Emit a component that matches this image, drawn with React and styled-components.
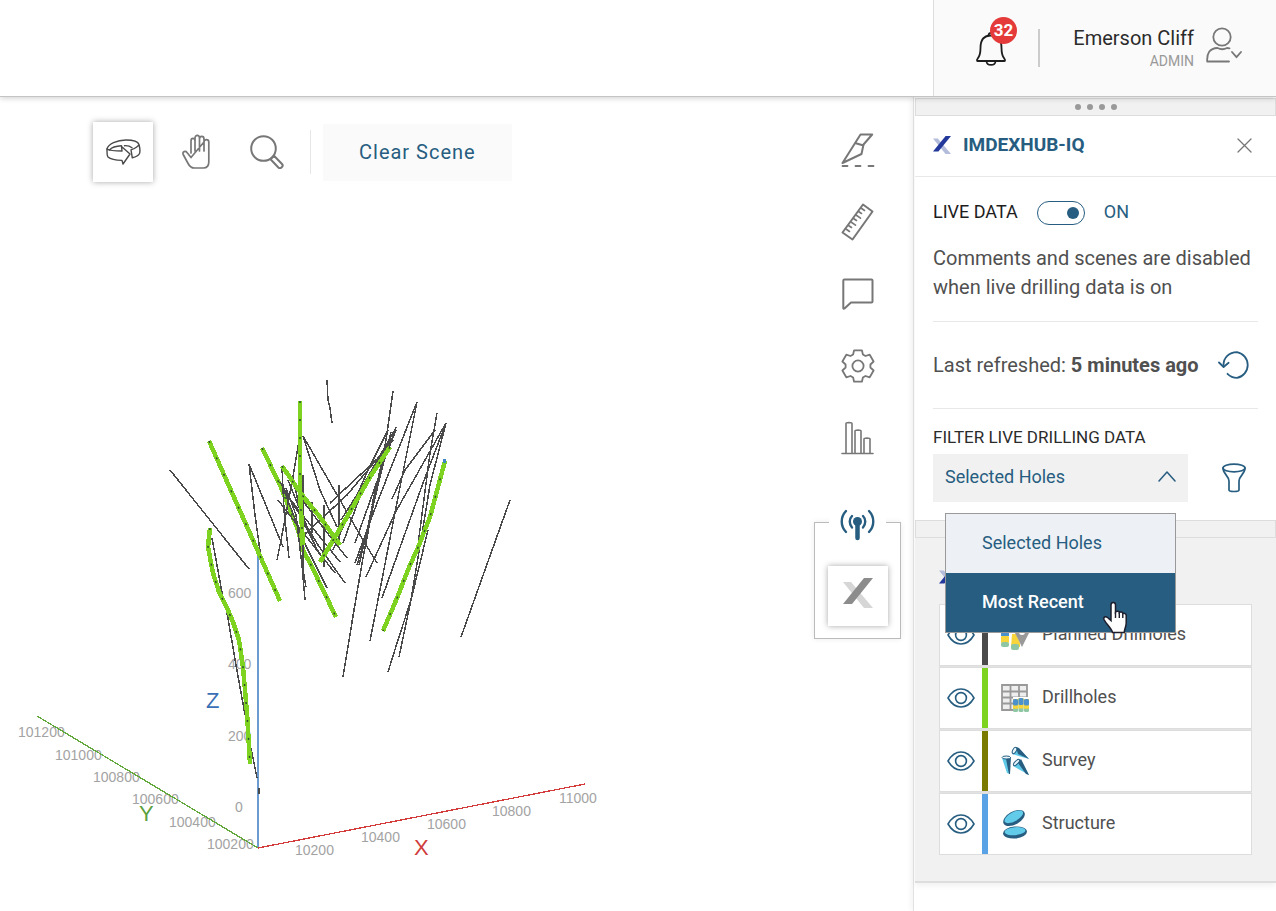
import React, { useState } from 'react'
import styled, { createGlobalStyle } from 'styled-components';

const GlobalStyle = createGlobalStyle`
  * {
    box-sizing: border-box;
  }
  body {
    margin: 0;
    background-color: #fff;
    font-family: Roboto, "Liberation Sans", sans-serif;
    color: #505050;
  }
  button, select {
    font-family: inherit;
    border: none;
    background: none;
    padding: 0;
    margin: 0;
    cursor: pointer;
  }
  ul {
    list-style: none;
    margin: 0;
    padding: 0;
  }
  svg {
    display: block;
  }
`
const Page = styled.div`
  min-height: 100vh;
  display: flex;
  flex-direction: column;
`
const Header = styled.header`
  position: relative;
  z-index: 2;
  display: flex;
  justify-content: flex-end;
  height: 97px;
  background-color: #fff;
  border-bottom: 1px solid #c4c4c4;
  box-shadow: 0 1px 6px rgba(0, 0, 0, .2);
`
const Profile = styled.div`
  display: flex;
  align-items: center;
  width: 343px;
  padding: 0 34px 0 42px;
  background-color: #fafafa;
  border-left: 1px solid #ddd;
`
const BellButton = styled.button`
  position: relative;
  width: 30px;
  height: 36px;
  margin-right: 32px;
`
const Badge = styled.span`
  position: absolute;
  top: -13px;
  left: 14px;
  width: 27px;
  height: 27px;
  border-radius: 50%;
  background-color: #e53a3a;
  color: #fff;
  font-size: 17px;
  font-weight: 700;
  line-height: 27px;
  text-align: center;
`
const Divider = styled.span`
  width: ${p => p.$thick ? 2 : 1}px;
  height: ${p => p.$thick ? 38 : 44}px;
  background-color: ${p => p.$thick ? '#ccc' : '#e6e6e6'};
`
const User = styled.button`
  flex: 1;
  display: flex;
  justify-content: flex-end;
  align-items: center;
  gap: 12px;
  > svg {
    margin-bottom: 6px;
  }
`
const UserText = styled.span`
  display: flex;
  flex-direction: column;
  align-items: flex-end;
  padding-top: 2px;
`
const UserName = styled.span`
  font-size: 20px;
  line-height: 24px;
  color: #2b2b2b;
`
const Role = styled.span`
  font-size: 14px;
  line-height: 22px;
  color: #999;
`
const Main = styled.main`
  flex: 1;
  display: flex;
  align-items: stretch;
`
const Stage = styled.section`
  flex: 1;
  min-width: 0;
`
const Toolbar = styled.div`
  display: flex;
  align-items: center;
  padding: 25px 0 0 93px;
`
const Tool = styled.button`
  display: grid;
  place-items: center;
  width: ${p => p.$active ? 60 : 71}px;
  height: 60px;
  background-color: #fff;
  box-shadow: ${p => p.$active ? '0 0 6px rgba(0, 0, 0, .35)' : 'none'};
`
const HubTool = styled(Tool)`
  padding-bottom: 6px;
`
const ToolPair = styled.div`
  display: flex;
  margin: 0 8px 0 7px;
`
const ClearButton = styled.button`
  height: 57px;
  margin-left: 12px;
  padding: 0 36px;
  background-color: #fafafa;
  color: #265d80;
  font-size: 20px;
  letter-spacing: 1px;
`
const Scene = styled.svg`
  margin-top: 188px;
  font-family: "Liberation Sans", Arial, sans-serif;
`
const Rail = styled.nav`
  display: flex;
  flex-direction: column;
  width: 87px;
  margin-right: 12px;
  padding-top: 17px;
`
const RailButton = styled.button`
  display: grid;
  place-items: center;
  height: 72px;
`
const RailGroup = styled.div`
  display: flex;
  flex-direction: column;
  align-items: center;
  gap: 15px;
  margin-top: 48px;
  padding-bottom: 12px;
  border: 1px solid #bbb;
  box-shadow: 0 0 6px rgba(0, 0, 0, .08);
`
const LiveButton = styled.button`
  display: grid;
  place-items: center;
  width: 57px;
  height: 52px;
  margin-top: -24px;
  background-color: #fff;
`
const Panel = styled.aside`
  width: 363px;
  border-left: 1px solid #e2e2e2;
  padding-left: 1px;
  box-shadow: -2px 0 6px rgba(0, 0, 0, .05);
`
const PanelInner = styled.div`
  padding-top: 1px;
  border-bottom: 2px solid #ddd;
  box-shadow: 0 3px 6px rgba(0, 0, 0, .06);
`
const Grip = styled.div`
  display: flex;
  justify-content: center;
  align-items: center;
  gap: 6px;
  height: 18px;
  background-color: #f1f1f1;
  border: 1px solid #ddd;
`
const Dot = styled.span`
  width: 6px;
  height: 6px;
  border-radius: 50%;
  background-color: #999;
`
const PanelHead = styled.div`
  display: flex;
  align-items: center;
  gap: 12px;
  height: 61px;
  padding: 0 24px 2px 18px;
  border-bottom: 1px solid #e8e8e8;
`
const PanelTitle = styled.h2`
  flex: 1;
  margin: 0;
  padding-bottom: 1px;
  font-size: 19px;
  font-weight: 700;
  color: #265d80;
`
const Section = styled.section`
  margin: 0 18px;
  padding: ${p => p.$pad};
  border-bottom: ${p => p.$last ? 'none' : '1px solid #e8e8e8'};
`
const LiveRow = styled.label`
  display: flex;
  align-items: flex-start;
  gap: 19px;
  height: 24px;
  font-size: 18px;
  line-height: 22px;
  color: #1d1d1d;
`
const Switch = styled.input`
  appearance: none;
  position: relative;
  width: 48px;
  height: 24px;
  margin: 0;
  border: 1px solid #265d80;
  border-radius: 12px;
  background-color: #fff;
  &::after {
    content: '';
    position: absolute;
    top: 5px;
    left: 5px;
    width: 12px;
    height: 12px;
    border-radius: 50%;
    background-color: #265d80;
  }
  &:checked::after {
    left: 29px;
  }
`
const SwitchState = styled.span`
  color: #265d80;
`
const Note = styled.p`
  margin: 19px 0 0;
  font-size: 20px;
  line-height: 29px;
`
const Refresh = styled.div`
  display: flex;
  justify-content: space-between;
  align-items: center;
  height: 86px;
  padding-right: 6px;
  font-size: 20px;
`
const FilterLabel = styled.label`
  display: block;
  font-size: 17px;
  line-height: 20px;
  color: #2b2b2b;
`
const FilterRow = styled.div`
  display: flex;
  justify-content: space-between;
  align-items: center;
  margin-top: 7px;
  padding-right: 12px;
`
const SelectBox = styled.div`
  position: relative;
  width: 255px;
  > svg {
    position: absolute;
    top: 16px;
    right: 12px;
    pointer-events: none;
  }
`
const Select = styled.select`
  appearance: none;
  display: block;
  width: 100%;
  height: 48px;
  padding: 0 12px 4px;
  background-color: #f1f1f1;
  color: #265d80;
  font-size: 18px;
`
const Menu = styled.ul`
  position: absolute;
  z-index: 3;
  top: 59px;
  left: 12px;
  width: 231px;
  border: 1px solid #999;
  background-color: #edf1f5;
`
const Option = styled.button`
  display: block;
  width: 100%;
  height: 59px;
  padding: 0 0 2px 36px;
  text-align: left;
  font-size: 18px;
  font-weight: ${p => p.$hover ? 500 : 400};
  color: ${p => p.$hover ? '#fff' : '#265d80'};
  background-color: ${p => p.$hover ? '#265d80' : '#edf1f5'};
`
const Pointer = styled.span`
  position: absolute;
  z-index: 4;
  top: 147px;
  left: 169px;
  pointer-events: none;
`
const Layers = styled.section`
  padding: 0 24px 26px;
  background-color: #f1f1f1;
`
const LayersHead = styled.div`
  display: flex;
  align-items: center;
  height: 66px;
  padding-top: 11px;
`
const LayerList = styled.ul`
  display: flex;
  flex-direction: column;
  gap: 1px;
  background-color: #e2e2e2;
`
const Layer = styled.li`
  display: flex;
  align-items: center;
  height: 62px;
  border: 1px solid #ddd;
  background-color: #fff;
  font-size: 18px;
`
const EyeButton = styled.button`
  display: grid;
  place-items: center;
  width: 42px;
  height: 60px;
`
const Strip = styled.span`
  width: 6px;
  height: 60px;
  margin-right: 13px;
  background-color: ${p => p.$color};
`
const LayerName = styled.span`
  margin-left: 13px;
  padding-bottom: 4px;
`

const Line = ({ children, w, h, color = '#777', width = 2 }) => (
  <svg width={w} height={h} viewBox={`0 0 ${w} ${h}`} fill="none" stroke={color}
    strokeWidth={width} strokeLinejoin="round" strokeLinecap="round" aria-hidden="true">
    {children}
  </svg>
)

const BrandX = ({ size, back = '#b3bcdb', front = '#22399b' }) => (
  <svg width={size} height={size} viewBox="0 0 30 30" aria-hidden="true">
    <path d="M0 4h8l22 26h-9z" fill={back} />
    <path d="M21 0h9L9 26H0z" fill={front} />
  </svg>
)

const Bell = () => (
  <Line w={30} h={36} color="#1d1d1d" width={1.8}>
    <path d="M1.500 31c-.7 0-.7-1.500 0-2.200C4 26 4.500 23 4.500 18 4.500 10 8 5.500 15 5.500S25.500 10 25.500 18c0 5 .5 8 3 10.800.7.700.7 2.200 0 2.200z" />
    <path d="M12.500 5.500c0-3.500 5-3.500 5 0M10.500 31.500c.5 4.500 8.500 4.500 9 0" />
  </Line>
)

const UserIcon = () => (
  <Line w={36} h={36} width={1.8}>
    <circle cx="16" cy="10" r="8.700" />
    <path d="M23 34.500H1.200c-.5-8 2.300-13.300 10.300-13.500 3 1.600 6.500 1.600 9.500 0l2.500.4" />
    <path d="M26 25l4.500 5.200L35 25" />
  </Line>
)

const Orbit = () => (
  <Line w={35} h={26} color="#4a4a4a" width={1.4}>
    <path d="M1 10C2 5 11 1 20 1c7 0 12 1.500 13 4.500.8 3 1.200 7 .5 9-1 2-3.500 3.300-7.200 4.300L25 10.800c3.300-1 6.500-2.600 8-5.300" />
    <path d="M1 10c0 4-.3 6 1 8 3 2.500 9 3.200 14 3.400L17 25l7-10-8.500-7.500.5 4.500C10 12 4 12 1 10z" />
    <path d="M3.500 11C6 8 11 7 15.500 6.800M18.500 6.700c3-.2 5.500.4 7.500 2" />
  </Line>
)

const Hand = () => (
  <Line w={28} h={36} width={1.700}>
    <path d="M9 19V7c0-3.500 4-3.500 4 0v10M13 7V4c0-3.600 4.500-3.600 4.500 0v13M17.500 5c0-3.500 4.500-3.500 4.500 0v12M22 8c0-3.300 4.800-3.300 4.800 0v20c0 4-2 6-5.500 6h-9c-3 0-5-2-6.500-5L1.200 20.500C0 17.500 3.500 16.500 5 18.500l4 5z" />
  </Line>
)

const Magnifier = () => (
  <Line w={34} h={34}>
    <circle cx="13.500" cy="13.500" r="12.300" />
    <path d="M20.500 24.300l3.500-3.600 8 8.300c2 2.200-1.500 5.500-3.600 3.500z" />
  </Line>
)

const Slice = () => (
  <Line w={34} h={34}>
    <path d="M19.500 1.500h11.700L22.500 11.500l-2 9.500L1.500 30z M14 10l8.500 2.500" />
    <path d="M1.500 33h5M14.500 33h5M27.500 33h5" strokeWidth="1.800" />
  </Line>
)

const Ruler = () => (
  <Line w={34} h={38}>
    <path d="M22 1.500l9.500 7L11.500 36.500l-10-7z" />
    <path d="M20 5l3.500 2.500M17.500 8.500l3 2M15 12l4.500 3.200M12.500 15.500l3 2M10 19l4.500 3.200M7.500 22.500l3 2M5 26l3.500 2.500" strokeWidth="1.600" />
  </Line>
)

const Comment = () => (
  <Line w={32} h={32}>
    <path d="M2.500 1.500h27c.8 0 1 .3 1 1v21c0 .7-.3 1-1 1H9L2.500 30.500c-.7.500-1.200.3-1.200-.5V2.500c0-.7.300-1 1.200-1z" />
  </Line>
)

// six teeth around the hub
const cogPoints = [0, 60, 120, 180, 240, 300].flatMap(a =>
  [[-23, 12.5], [-14, 16.2], [14, 16.2], [23, 12.5]].map(([d, r]) => {
    const t = (a + d) * Math.PI / 180
    return `${(18 + r * Math.sin(t)).toFixed(1)},${(18 - r * Math.cos(t)).toFixed(1)}`
  })
).join(' ')

const Cog = () => (
  <Line w={36} h={36} width={1.800}>
    <polygon points={cogPoints} />
    <circle cx="18" cy="18" r="5.600" />
  </Line>
)

const Bars = () => (
  <Line w={34} h={34} width={1.600}>
    <path d="M1 32.500h31M5 32V2.500c0-1.300 6-1.300 6 0V32M14 32V10c0-1.300 6-1.300 6 0v22M23 32V18c0-1.300 6-1.300 6 0v14" />
  </Line>
)

const Antenna = () => (
  <Line w={36} h={32} color="#265d80" width={2.400}>
    <circle cx="17.500" cy="12.500" r="4.500" fill="#265d80" stroke="none" />
    <path d="M17.500 12v17" strokeWidth="4.500" />
    <path d="M12 7c-3 3-3 8 0 11.500M6 2C.300 8 .300 17 6 23M23 7c3 3 3 8 0 11.500M29 2c5.700 6 5.700 15 0 21" />
  </Line>
)

const RefreshIcon = () => (
  <Line w={34} h={28} color="#265d80" width={1.8}>
    <path d="M5.500 14C5.500 7 11 1.200 19 1.200A13 13 0 0 1 19 26.800c-4 0-7-1.500-9.500-4" />
    <path d="M1 11.500l4.600 4.500 5-4.200" />
  </Line>
)

const Funnel = () => (
  <Line w={24} h={30} color="#265d80" width={1.700}>
    <ellipse cx="12" cy="5" rx="11" ry="3.800" />
    <path d="M1 5c0 6 6 8 6 13v9c0 2 10 2 10 0v-9c0-5 6-7 6-13" />
  </Line>
)

const Eye = () => (
  <Line w={28} h={20} color="#265d80" width={1.600}>
    <path d="M1 10C8-2 20-2 27 10 20 22 8 22 1 10z" />
    <circle cx="14" cy="10" r="5.400" />
  </Line>
)

const HandCursor = () => (
  <svg width="26" height="34" viewBox="0 0 26 34" aria-hidden="true">
    <path d="M9 4c0-3.500 4.500-3.500 4.500 0v7c1-1.300 3.500-1 3.800.5 1.200-1 3.300-.5 3.500 1 1.500-.7 3.400.2 3.400 2V22c0 4-1.700 5-2 9.500H10.500C9.500 27 4 23 2 18.500c-1-2.500 1.500-3.500 3.500-2L9 19.500z" fill="#fff" stroke="#1d1d2b" strokeWidth="1.500" />
    <path d="M13.500 11v6M17.300 12v5M20.800 13v4" stroke="#1d1d2b" strokeWidth="1.400" />
  </svg>
)

const Core = ({ x, y, h = 14 }) => (
  <g>
    <rect x={x} y={y} width="5" height={h} rx="1.500" fill="#8fc7a4" />
    <rect x={x} y={y} width="5" height={h * .75} fill="#f8d53b" />
    <rect x={x} y={y} width="5" height={h * .5} rx="1.500" fill="#4b91cd" />
  </g>
)

const PlannedIcon = () => (
  <svg width="28" height="30" viewBox="0 0 28 30" aria-hidden="true">
    <rect x="0" y="0" width="8" height="16" fill="#4b91cd" />
    <rect x="0" y="16" width="8" height="7" rx="1" fill="#f8d53b" />
    <rect x="0" y="22" width="8" height="5" rx="2" fill="#8fc7a4" />
    <path d="M11 14h4l4 9v4h-9z" fill="#f8d53b" />
    <rect x="10" y="24" width="8" height="6" rx="2" fill="#8fc7a4" />
    <path d="M13 11a7.500 7.500 0 0 1 15 2L21 27z" fill="#999" />
    <circle cx="21" cy="12" r="3" fill="#fff" />
  </svg>
)

const DrillholesIcon = () => (
  <svg width="28" height="28" viewBox="0 0 28 28" aria-hidden="true">
    <path d="M1 1h25v25H1zM1 7.500h25M1 13.500h25M1 19.500h25M9.500 1v25M18 1v25" fill="#eee" stroke="#999" strokeWidth="1.800" />
    <path d="M12 13h16v15H12z" fill="#fff" />
    <Core x={12} y={15} h={13} />
    <Core x={17.5} y={14} />
    <Core x={23} y={15} h={13} />
  </svg>
)

const SurveyIcon = () => (
  <svg width="28" height="30" viewBox="0 0 28 30" aria-hidden="true">
    <path d="M11 8l5-7 12 12z" fill="#5fc9e8" />
    <path d="M15 1l3 1 10 11-11-5z" fill="#265d80" />
    <path d="M1 12l8-2v18l-3-1z" fill="#5fc9e8" />
    <path d="M5 13l5-2-1 17H8z" fill="#265d80" />
    <path d="M12 20l7-7 9 16z" fill="#5fc9e8" />
    <path d="M17 17l3-4 8 16-3-1z" fill="#265d80" />
    <ellipse cx="13.500" cy="4.500" rx="3.400" ry="1.800" transform="rotate(-62 13.500 4.500)" fill="#e8f6fb" stroke="#265d80" />
    <ellipse cx="5.300" cy="11.500" rx="4.200" ry="1.500" fill="#e8f6fb" stroke="#265d80" />
    <ellipse cx="15.500" cy="16.500" rx="4" ry="1.600" transform="rotate(-45 15.500 16.500)" fill="#e8f6fb" stroke="#265d80" />
  </svg>
)

const StructureIcon = () => (
  <svg width="28" height="30" viewBox="0 0 28 30" aria-hidden="true">
    <g fill="#265d80">
      <ellipse cx="13" cy="9" rx="11.800" ry="6.500" transform="rotate(-29 13 9)" />
      <ellipse cx="14" cy="23.500" rx="12" ry="6" transform="rotate(-5 14 23.500)" />
    </g>
    <g fill="#62cbe9">
      <ellipse cx="12.800" cy="7.800" rx="10.300" ry="4.500" transform="rotate(-29 12.800 7.800)" />
      <ellipse cx="14" cy="22.200" rx="10.500" ry="4" transform="rotate(-5 14 22.200)" />
    </g>
  </svg>
)

const plannedHoles = [
  '327,380 328,400 330,408 332,423',
  '170,470 249,569',
  '249,464 255,515 261,558',
  '249,464 283,547',
  '303,436 320,490 337,527',
  '303,436 340,500 360,535 377,563',
  '300,435 293,477 282,535 277,560',
  '282,467 284,510 289,558',
  '303,475 303,570 306,587',
  '339,485 339,545',
  '324,505 324,567',
  '312,502 312,533',
  '393,440 347,495 305,534',
  '390,447 330,503',
  '278,500 305,535 335,573',
  '280,482 318,545 345,583',
  '282,485 303,540 327,588',
  '283,490 312,527 340,562',
  '293,478 302,520 320,555',
  '300,497 325,530 347,558',
  '286,488 296,515 302,565 305,600',
  '288,480 300,510 315,545',
  '393,391 386,440 363,558 354,610 343,677',
  '417,402 400,487 370,641',
  '417,402 377,503 355,563',
  '437,413 430,453 418,545',
  '435,430 405,470 392,499',
  '446,423 395,513 366,577',
  '446,423 423,483 382,598',
  '446,423 430,485 411,600 399,657',
  '428,530 411,600 398,640 388,672',
  '396,427 374,490 355,543',
  '391,432 372,510 359,565',
  '386,443 378,480 366,535 357,565',
  '394,431 366,480 343,543',
  '388,430 368,470 333,550',
  '392,438 360,490 341,520',
  '396,430 380,470 372,505',
  '510,500 461,637',
  '212,538 223,598',
  '227,613 236,665 245,715',
  '251,748 257,778',
  '259,788 259,794',
]

// holes drawn behind the planned ones
const drilledBack = [
  '262,448 280,485 298,530 303,550 312,567 336,617',
]

const drilledFront = [
  '209,441 280,601',
  '300,401 300,493 303,545',
  '282,466 302,495 320,517 340,545',
  '390,447 370,477 347,517 320,562',
  '445,461 438,487 430,517 417,550 410,565 397,598 383,631',
  '210,528 208,547 213,573 219,592 227,608 233,622 239,640 243,667 247,713 250,764',
]

const axisLabels = [
  [18, 737, '101200'], [55, 760, '101000'], [93, 782, '100800'], [132, 804, '100600'],
  [169, 827, '100400'], [207, 849, '100200'],
  [228, 598, '600'], [228, 669, '400'], [228, 741, '200'], [235, 812, '0'],
  [295, 855, '10200'], [361, 842, '10400'], [427, 829, '10600'], [492, 816, '10800'], [559, 803, '11000'],
]

const Drilled = ({ points }) => (
  <g>
    <polyline points={points} stroke="#7ed321" strokeWidth="4.500" shapeRendering="crispEdges" />
    <polyline points={points} stroke="#2c4a2c" strokeWidth="1.500" strokeDasharray="2 16" />
  </g>
)

const DrillScene = () => (
  <Scene width="640" height="500" viewBox="0 370 640 500" role="img" aria-label="Drillhole scene">
    <g fontSize="14" fill="#a3a3a3">
      {axisLabels.map(([x, y, text]) => <text key={text} x={x} y={y}>{text}</text>)}
    </g>
    <g fill="none" strokeLinejoin="round">
      <g shapeRendering="crispEdges">
        <path d="M258 556V848" stroke="#6c9bd2" strokeWidth="2" />
        <path d="M37 716L258 848" stroke="#62a83c" strokeWidth="1.300" />
        <path d="M258 848L585 784" stroke="#d43c3c" strokeWidth="1.300" />
      </g>
      {drilledBack.map(points => <Drilled key={points} points={points} />)}
      {plannedHoles.map(points => (
        <polyline key={points} points={points} stroke="#4a4a4a" strokeWidth="1.500" shapeRendering="crispEdges" />
      ))}
      {drilledFront.map(points => <Drilled key={points} points={points} />)}
    </g>
    <rect x="443" y="459" width="3" height="4" fill="#3f86c6" />
    <g fontSize="22">
      <text x="206" y="708" fill="#3a6fb5">Z</text>
      <text x="139" y="821" fill="#5aa03c">Y</text>
      <text x="414" y="855" fill="#d03c3c">X</text>
    </g>
  </Scene>
)

const layers = [
  { name: 'Planned Drillholes', color: '#4a4a4a', Icon: PlannedIcon },
  { name: 'Drillholes', color: '#7ed321', Icon: DrillholesIcon },
  { name: 'Survey', color: '#7a7a00', Icon: SurveyIcon },
  { name: 'Structure', color: '#5aa2e6', Icon: StructureIcon },
]

const railTools = [
  { name: 'Slice', Icon: Slice },
  { name: 'Measure', Icon: Ruler },
  { name: 'Comments', Icon: Comment },
  { name: 'Settings', Icon: Cog },
  { name: 'Charts', Icon: Bars },
]

const filters = ['Selected Holes', 'Most Recent']

const PanelGrip = () => (
  <Grip>
    <Dot /><Dot /><Dot /><Dot />
  </Grip>
)

const App = () => {
  const [live, setLive] = useState(true);
  const [filter, setFilter] = useState(filters[0]);
  const [hovered, setHovered] = useState(filters[1]);

  return (
    <Page>
      <GlobalStyle />
      <Header>
        <Profile>
          <BellButton aria-label="Notifications">
            <Bell />
            <Badge>32</Badge>
          </BellButton>
          <Divider $thick />
          <User>
            <UserText>
              <UserName>Emerson Cliff</UserName>
              <Role>ADMIN</Role>
            </UserText>
            <UserIcon />
          </User>
        </Profile>
      </Header>
      <Main>
        <Stage>
          <Toolbar>
            <Tool $active aria-label="Orbit"><Orbit /></Tool>
            <ToolPair>
              <Tool aria-label="Pan"><Hand /></Tool>
              <Tool aria-label="Zoom"><Magnifier /></Tool>
            </ToolPair>
            <Divider />
            <ClearButton>Clear Scene</ClearButton>
          </Toolbar>
          <DrillScene />
        </Stage>
        <Rail>
          {railTools.map(({ name, Icon }) => (
            <RailButton key={name} aria-label={name}><Icon /></RailButton>
          ))}
          <RailGroup>
            <LiveButton aria-label="Live data"><Antenna /></LiveButton>
            <HubTool $active aria-label="Hub"><BrandX size={30} back="#d6d6d6" front="#8c8c8c" /></HubTool>
          </RailGroup>
        </Rail>
        <Panel>
          <PanelInner>
            <PanelGrip />
            <PanelHead>
              <BrandX size={18} />
              <PanelTitle>IMDEXHUB-IQ</PanelTitle>
              <button aria-label="Close">
                <Line w={15} h={15} width={1.300}><path d="M1 1l13 13M14 1L1 14" /></Line>
              </button>
            </PanelHead>
            <Section $pad="24px 0 19px">
              <LiveRow>
                LIVE DATA
                <Switch type="checkbox" role="switch" checked={live} onChange={e => setLive(e.target.checked)} />
                <SwitchState>{live ? 'ON' : 'OFF'}</SwitchState>
              </LiveRow>
              <Note>Comments and scenes are disabled when live drilling data is on</Note>
            </Section>
            <Section $pad="0">
              <Refresh>
                <span>Last refreshed: <b>5 minutes ago</b></span>
                <button aria-label="Refresh"><RefreshIcon /></button>
              </Refresh>
            </Section>
            <Section $last $pad="18px 0 18px">
              <FilterLabel htmlFor="filter">FILTER LIVE DRILLING DATA</FilterLabel>
              <FilterRow>
                <SelectBox>
                  <Select id="filter" value={filter} onChange={e => setFilter(e.target.value)}>
                    {filters.map(name => <option key={name}>{name}</option>)}
                  </Select>
                  <Line w={18} h={12} color="#265d80" width={1.500}><path d="M1 11l8-9 8 9" /></Line>
                  <Menu>
                    {filters.map(name => (
                      <li key={name}>
                        <Option
                          $hover={hovered === name}
                          onMouseEnter={() => setHovered(name)}
                          onClick={() => setFilter(name)}
                        >
                          {name}
                        </Option>
                      </li>
                    ))}
                  </Menu>
                  <Pointer><HandCursor /></Pointer>
                </SelectBox>
                <button aria-label="Filter"><Funnel /></button>
              </FilterRow>
            </Section>
            <PanelGrip />
            <Layers>
              <LayersHead><BrandX size={18} /></LayersHead>
              <LayerList>
                {layers.map(({ name, color, Icon }) => (
                  <Layer key={name}>
                    <EyeButton aria-label={`Toggle ${name}`}><Eye /></EyeButton>
                    <Strip $color={color} />
                    <Icon />
                    <LayerName>{name}</LayerName>
                  </Layer>
                ))}
              </LayerList>
            </Layers>
          </PanelInner>
        </Panel>
      </Main>
    </Page>
  )
}

export default App
